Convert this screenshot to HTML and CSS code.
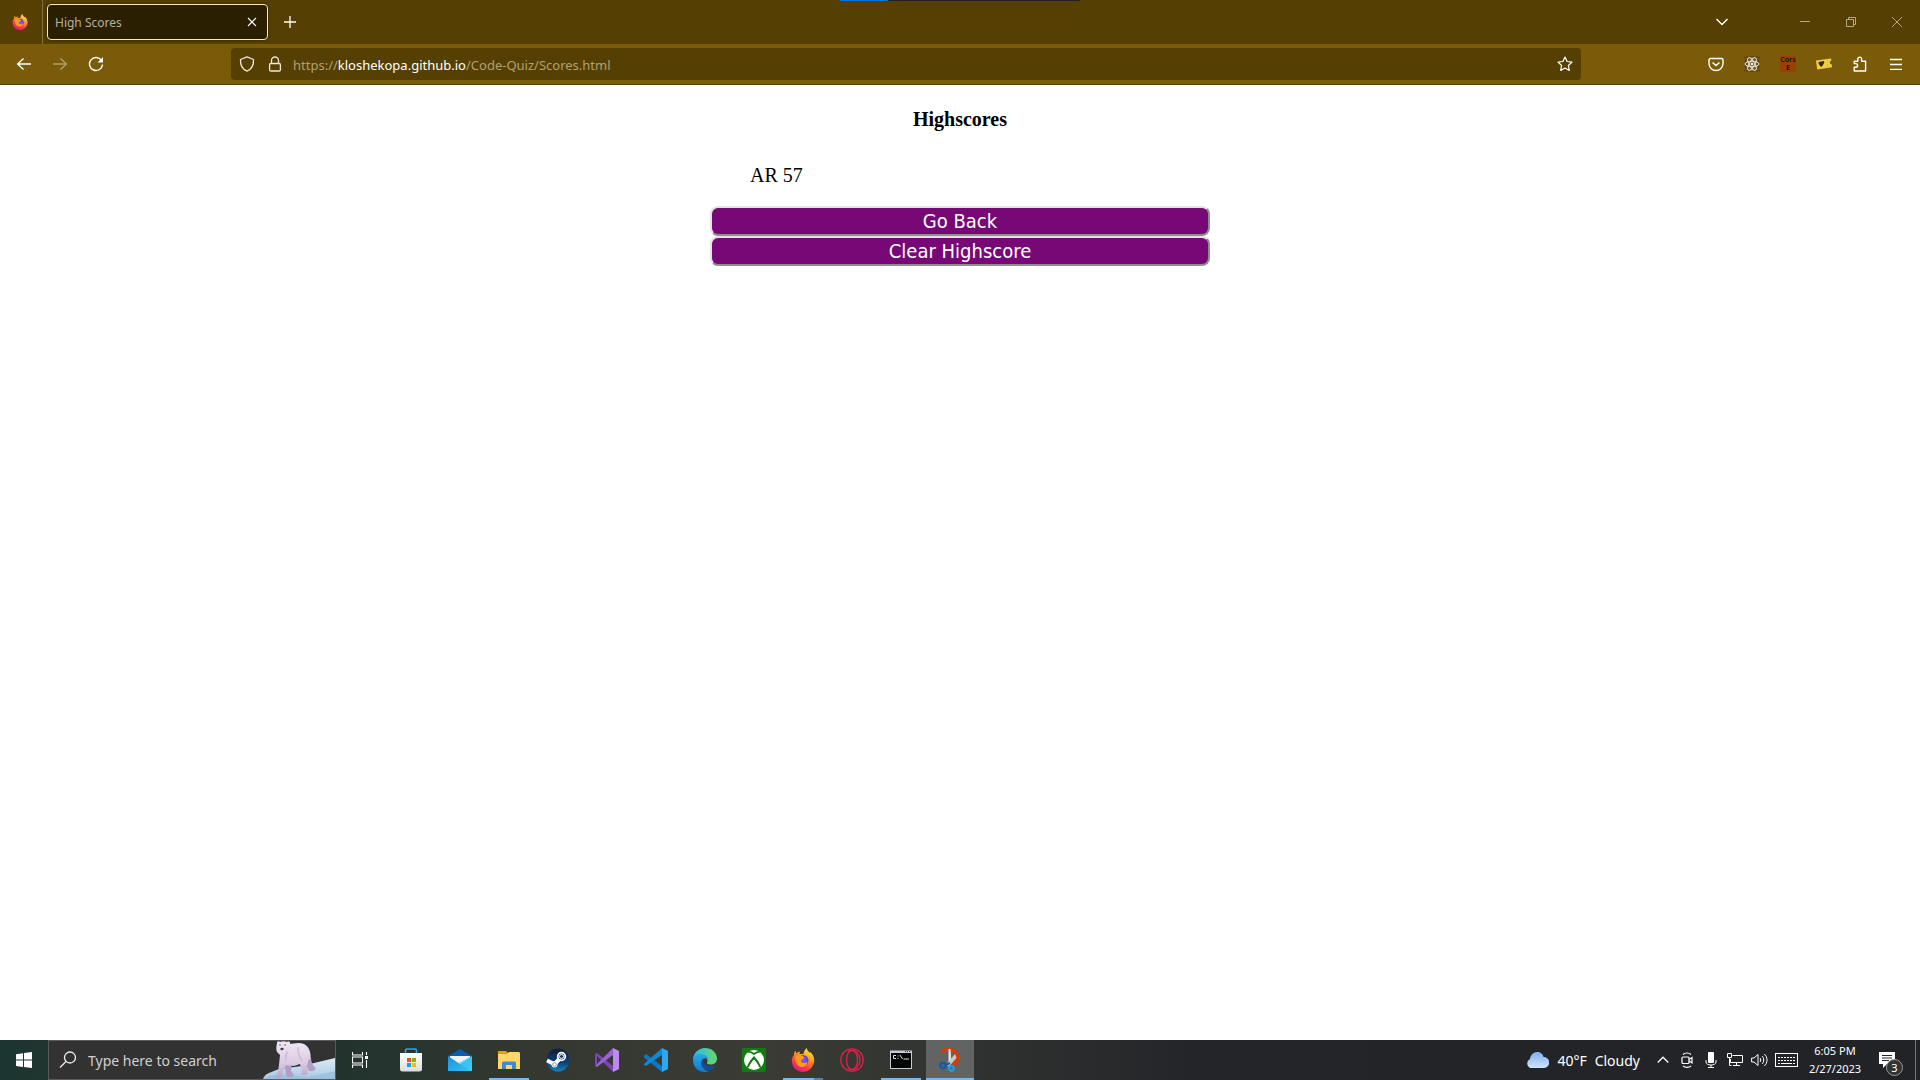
FILE: index.html
```html
<!DOCTYPE html>
<html lang="en">
<head>
<meta charset="utf-8">
<title>High Scores</title>
<link rel="stylesheet" href="styles.css">
</head>
<body>
<svg class="defs" width="0" height="0" aria-hidden="true">
  <defs>
    <linearGradient id="fxA" x1="0.8" y1="0" x2="0.3" y2="1"><stop offset="0" stop-color="#fff44f"/><stop offset=".4" stop-color="#ff980e"/><stop offset=".75" stop-color="#ff3647"/><stop offset="1" stop-color="#e31587"/></linearGradient>
    <radialGradient id="fxB"><stop offset="0" stop-color="#9059ff"/><stop offset="1" stop-color="#5b3fd0"/></radialGradient>
    <linearGradient id="store" x1="0" y1="0" x2="0" y2="1"><stop offset="0" stop-color="#fff"/><stop offset="1" stop-color="#dcdcdc"/></linearGradient>
    <linearGradient id="mail" x1="0" y1="0" x2="1" y2="1"><stop offset="0" stop-color="#1b8fe0"/><stop offset="1" stop-color="#35c7f7"/></linearGradient>
    <linearGradient id="steam" x1="0" y1="0" x2="0" y2="1"><stop offset="0" stop-color="#101c3c"/><stop offset=".6" stop-color="#0d3f74"/><stop offset="1" stop-color="#1684bd"/></linearGradient>
    <linearGradient id="edgeA" x1="0" y1="0" x2="1" y2="0"><stop offset="0" stop-color="#2bb8ee"/><stop offset="1" stop-color="#65d96b"/></linearGradient>
    <linearGradient id="edgeB" x1="0" y1="0" x2="0" y2="1"><stop offset="0" stop-color="#2aa7e6"/><stop offset="1" stop-color="#1378d0"/></linearGradient>
    <linearGradient id="cloud" x1="0" y1="0" x2="0" y2="1"><stop offset="0" stop-color="#7fb0ee"/><stop offset="1" stop-color="#cfe2fb"/></linearGradient>
    <linearGradient id="ice" x1="0" y1="0" x2="0" y2="1"><stop offset="0" stop-color="#dbeaf6"/><stop offset="1" stop-color="#a9c9e4"/></linearGradient>
    <linearGradient id="fur" x1="0" y1="0" x2="0" y2="1"><stop offset="0" stop-color="#f1e7f2"/><stop offset=".6" stop-color="#d9cbe2"/><stop offset="1" stop-color="#b7a3c9"/></linearGradient>
    <symbol id="firefox" viewBox="0 0 24 24">
      <path fill="url(#fxA)" d="M3 7c0-2 .5-3.200 1.400-4.200.2 1.200.7 2 1.400 2.400C7 4 8 3.600 9.300 3.700 8.600 4.500 8.300 5.200 8.300 6h4c.6-2.500 1.700-4.600 3.400-6 .3 1.800 1 2.800 2.300 4 .2.300.5.500.8.900.4-.2.500-.5.500-.9C22 6.500 23.500 9.500 23.200 13c-.5 6-5.200 11-11.300 11C5.500 24 .8 19 .8 12.800.8 10.600 1.500 8.800 3 7z"/>
      <circle cx="12" cy="12.500" r="5.500" fill="url(#fxB)"/>
      <path fill="#ff9a1f" d="M4.500 9c2-2 4-2.400 6.500-1.300 1 .5 1.700 1.200 2.400 1.900-.5 1.700-2.400 1.600-3.400 2.600-.5.600.1 2 1.400 2.500 2 .8 4-.2 4.800-1 .3 3-2.600 5.600-6 5.200C6 18.300 3.600 13.500 4.500 9z"/>
    </symbol>
  </defs>
</svg>

<header class="tabs">
  <span class="pinned"><svg width="16" height="16"><use href="#firefox"/></svg></span>
  <div class="tab">
    <span class="tab-title">High Scores</span>
    <button class="tab-close" aria-label="Close tab"><svg width="10" height="10" viewBox="0 0 10 10"><path d="M1 1l8 8M9 1l-8 8" stroke="#fff" stroke-width="1.100"/></svg></button>
  </div>
  <button class="tool" aria-label="New tab"><svg width="12" height="12" viewBox="0 0 12 12"><path d="M6 0v12M0 6h12" stroke="#fff" stroke-width="1.300"/></svg></button>
  <button class="tool all-tabs" aria-label="List all tabs"><svg width="14" height="8" viewBox="0 0 14 8"><path d="M1.500 1L7 6.500 12.500 1" fill="none" stroke="#fff" stroke-width="1.400"/></svg></button>
  <div class="window-buttons">
    <button aria-label="Minimize"><svg width="10" height="10" viewBox="0 0 10 10"><path d="M0 4.500h10" stroke="currentColor"/></svg></button>
    <button aria-label="Restore"><svg width="10" height="10" viewBox="0 0 10 10"><path d="M.5 2.500h7v7h-7zM2.500 2.500v-2h7v7h-2" fill="none" stroke="currentColor"/></svg></button>
    <button aria-label="Close"><svg width="10" height="10" viewBox="0 0 10 10"><path d="M0 0l10 10M10 0L0 10" stroke="currentColor"/></svg></button>
  </div>
  <span class="progress"></span>
</header>

<nav class="toolbar">
  <button class="tool" aria-label="Back"><svg width="16" height="16" viewBox="0 0 16 16"><path d="M15 8H1.500M7.500 2.500L1.700 8l5.800 5.500" fill="none" stroke="#fff" stroke-width="1.400"/></svg></button>
  <button class="tool dim" aria-label="Forward"><svg width="16" height="16" viewBox="0 0 16 16"><path d="M1 8h13.500M8.500 2.500L14.300 8l-5.800 5.500" fill="none" stroke="#fff" stroke-width="1.400"/></svg></button>
  <button class="tool" aria-label="Reload"><svg width="16" height="16" viewBox="0 0 16 16"><path d="M13.500 4.500A6.500 6.500 0 1 0 14.500 8.500" fill="none" stroke="#fff" stroke-width="1.400"/><path d="M15 1v5.500H9.500z" fill="#fff"/></svg></button>
  <div class="address">
    <svg width="16" height="16" viewBox="0 0 16 16"><path d="M8 .8l6.500 2.700C14.800 8.500 13 13 8 15.200 3 13 1.200 8.500 1.500 3.500z" fill="none" stroke="#eee7d6" stroke-width="1.300" stroke-linejoin="round"/></svg>
    <svg width="16" height="16" viewBox="0 0 16 16"><path d="M4.500 7.500V4.500a3.500 3.500 0 0 1 7 0v3" fill="none" stroke="#eee7d6" stroke-width="1.300"/><rect x="2.600" y="7.500" width="10.800" height="7.500" rx="1.200" fill="none" stroke="#eee7d6" stroke-width="1.300"/></svg>
    <span class="url">https://<b>kloshekopa.github.io</b>/Code-Quiz/Scores.html</span>
    <button class="star" aria-label="Bookmark"><svg width="16" height="16" viewBox="0 0 16 16"><path d="M8 1l2.100 4.500 4.900.6-3.600 3.400.9 4.900L8 12l-4.300 2.400.9-4.900L1 6.100l4.900-.6z" fill="none" stroke="#fff" stroke-width="1.200" stroke-linejoin="round"/></svg></button>
  </div>
  <button class="tool" aria-label="Pocket"><svg width="16" height="16" viewBox="0 0 16 16"><path d="M2.500 2.500h11a1.500 1.500 0 0 1 1.500 1.500v3.500a7 7 0 0 1-14 0V4a1.500 1.500 0 0 1 1.500-1.500z" fill="none" stroke="#fff" stroke-width="1.400"/><path d="M4.500 6.500L8 9.500l3.500-3" fill="none" stroke="#fff" stroke-width="1.600"/></svg></button>
  <button class="tool" aria-label="React tools"><svg width="16" height="16" viewBox="0 0 16 16"><rect width="16" height="16" fill="#665014"/><g fill="none" stroke="#eee8dc" stroke-width="1"><ellipse cx="8" cy="8" rx="7" ry="2.700"/><ellipse cx="8" cy="8" rx="7" ry="2.700" transform="rotate(60 8 8)"/><ellipse cx="8" cy="8" rx="7" ry="2.700" transform="rotate(120 8 8)"/></g><circle cx="8" cy="8" r="1.300" fill="#fff"/></svg></button>
  <button class="tool" aria-label="Cors"><span class="cors">Cors<br>E</span></button>
  <button class="tool" aria-label="Tickets"><svg width="16" height="16" viewBox="0 0 16 16"><path d="M0 4.500L15 2.500l.3 2.300a1.500 1.500 0 0 0 .4 3.500l.3 3L1.200 13.500z" fill="#f2cf3e"/><path d="M2.500 6l5.500-.9.300 1.600-2.300 3.800-1.200.2-2-2.700z" fill="#2f2a12"/><path d="M11.500 4v8" stroke="#d2ad28" stroke-dasharray="1 1"/></svg></button>
  <button class="tool" aria-label="Extensions"><svg width="16" height="16" viewBox="0 0 16 16"><path d="M2.200 15V11.200h1.600a1.800 1.800 0 0 0 0-3.600H2.200V5.200h3.600V3a1.900 1.900 0 0 1 3.800 0v2.200h4V15z" fill="none" stroke="#fff" stroke-width="1.400" stroke-linejoin="round"/></svg></button>
  <button class="tool" aria-label="Menu"><svg width="12" height="12" viewBox="0 0 12 12"><path d="M0 1.500h12M0 6.500h12M0 11.300h12" stroke="#fff" stroke-width="1.300"/></svg></button>
</nav>

<main class="page">
  <h1>Highscores</h1>
  <ul class="scores"><li>AR 57</li></ul>
  <button class="action">Go Back</button>
  <button class="action">Clear Highscore</button>
</main>

<footer class="taskbar">
  <button class="start" aria-label="Start"><svg width="16" height="16" viewBox="0 0 16 16"><path d="M0 2.200L7 1.200v6.400H0zM8 1l8-1v7.600H8zM0 8.500h7v6.400l-7-1zM8 8.500h8V16l-8-1z" fill="#fff"/></svg></button>
  <div class="search">
    <svg width="18" height="18" viewBox="0 0 18 18"><circle cx="11" cy="6.500" r="5.500" fill="none" stroke="#eee" stroke-width="1.300"/><path d="M7 10.500L1 16.500" stroke="#eee" stroke-width="1.300"/></svg>
    <input type="text" placeholder="Type here to search" aria-label="Search">
    <svg class="bear" width="72" height="38" viewBox="0 0 72 38">
      <path d="M0 38c1-3 3-5 6-6l10-4 23-3 12-3 21-5v21z" fill="url(#ice)"/>
      <path d="M1 38c8-5 15-6 24-4l20 2 27-6v8z" fill="#8fbadd" opacity=".6"/>
      <path d="M35 15l13 1c0 4 1 6 2 8l3 4-3 2h-4l-3-6-5-1zM21 20l8 2-1 8 3 4-2 2h-5l-1-3z" fill="#b39fc6"/>
      <path d="M14 2c0-2 2-2 3-1 2-1 5-1 7 0 2-1 4 0 3 2 2 0 5-1 9-1 6 0 10 4 11 9 1 4 1 7-2 9l-1 6 1 6-2 2h-5l1-4-2-7-6 2-8-1-3 7-1 5-2 1h-5l1-3 2-3 1-7 1-10-2-2c-2-2-2-5-1-10z" fill="url(#fur)"/>
      <path d="M35 6c-1 5 1 9 4 14M25 10c-2 3-3 6-2 10" fill="none" stroke="#bda9cb" stroke-width="1.500" opacity=".6"/>
      <ellipse cx="19" cy="8" rx="1.700" ry="1.200" fill="#433850"/><circle cx="17" cy="4" r=".7" fill="#433850"/><circle cx="22" cy="4" r=".7" fill="#433850"/>
    </svg>
  </div>
  <div class="apps">
    <button class="task-view" aria-label="Task view"><svg width="16" height="16" viewBox="0 0 16 16"><path d="M.5 0v3h10V0M.5 16v-3h10v3M.5 5h10v6H.5zM14.500 0v3M14.500 8v8" fill="none" stroke="#fff" stroke-width="1.100"/><rect x="13" y="4" width="3" height="3" fill="#fff"/></svg></button>
    <button aria-label="Store"><svg width="24" height="24" viewBox="0 0 24 24"><path d="M6.500 6V2.500A1.500 1.500 0 0 1 8 1h8a1.500 1.500 0 0 1 1.500 1.500V6" fill="none" stroke="#26a9df" stroke-width="1.600"/><path d="M1 5h22v16a2.500 2.500 0 0 1-2.500 2.500h-17A2.500 2.500 0 0 1 1 21z" fill="url(#store)"/><path fill="#f25022" d="M8 10h4v4H8z"/><path fill="#7fba00" d="M13 10h4v4h-4z"/><path fill="#00a4ef" d="M8 15h4v4H8z"/><path fill="#ffb900" d="M13 15h4v4h-4z"/></svg></button>
    <button aria-label="Mail"><svg width="24" height="24" viewBox="0 0 24 24"><path d="M0 8L12 1l12 7v3H0z" fill="#0e5cae"/><path d="M2 8h20v8H2z" fill="#f3f3f3"/><path d="M0 8l12 8 12-8v15H0z" fill="url(#mail)"/><path d="M24 8v15L10 15z" fill="#3fd0fb" opacity=".6"/></svg></button>
    <button class="open" aria-label="File Explorer"><svg width="24" height="24" viewBox="0 0 24 24"><path d="M1 3h8l2 2h12v4H1z" fill="#e0a014"/><path d="M1 6h9l2-2h10l1 1v16H1z" fill="#ffd766"/><path d="M5 21v-6a1.500 1.500 0 0 1 1.500-1.500h11A1.500 1.500 0 0 1 19 15v6h-4v-4H9v4z" fill="#3a8dd4"/></svg></button>
    <button aria-label="Steam"><svg width="24" height="24" viewBox="0 0 24 24"><circle cx="12" cy="12" r="11.500" fill="url(#steam)"/><path d="M1 12.500l7.500 3.500 5-5" stroke="#fff" stroke-width="4" fill="none"/><circle cx="8.500" cy="16.500" r="3" fill="#fff"/><circle cx="8.500" cy="16.500" r="1.800" fill="none" stroke="#5b7391" stroke-width=".7"/><circle cx="15.500" cy="8.500" r="3.800" fill="#17345f" stroke="#fff" stroke-width="1.800"/><circle cx="15.500" cy="8.500" r="2" fill="none" stroke="#fff"/></svg></button>
    <button aria-label="Visual Studio"><svg width="24" height="24" viewBox="0 0 24 24"><path d="M0 6l2-1 16 13v6L2 8v8l-2 2z" fill="#7b45b4"/><path d="M0 18l2-2L18 0v7L2 19z" fill="#9b60d6"/><path d="M18 0l6 3v18l-6 3z" fill="#bd8bf0"/></svg></button>
    <button aria-label="Visual Studio Code"><svg width="24" height="24" viewBox="0 0 24 24"><path d="M0 8l2-2 16 12v6L0 9.500z" fill="#0a78c2"/><path d="M0 16L18 0v7L2 18l-2-1z" fill="#1288d5"/><path d="M18 0l6 3v18l-6 3z" fill="#2ba8f2"/></svg></button>
    <button aria-label="Edge"><svg width="24" height="24" viewBox="0 0 24 24"><path d="M0 12A12 12 0 0 1 12 0c7 0 12 5 12 10.500 0 4-3 6-6.500 6-2.500 0-4-1-3.500-2 1.500-2 0-6-4-6.500C5 7.500 1 10 0 13z" fill="url(#edgeA)"/><path d="M0 12c1-5 5-7 9-6 4 .7 6 3 6 5-3-2-6.500 0-6.500 4 0 5 4.500 8.500 8 8-2 .7-4 1-5 1C5 24 0 18.500 0 12z" fill="url(#edgeB)"/><path d="M10 10.500c-4 5 0 12 7 12 2.500-1 4.500-3 6-5.500-3 2-7 2-9.500.5S10 13 10 10.500z" fill="#104f9e"/></svg></button>
    <button aria-label="Xbox"><svg width="24" height="24" viewBox="0 0 24 24"><rect width="24" height="24" rx="2" fill="#107c10"/><circle cx="12" cy="12" r="10" fill="#fff"/><path d="M6 4c2-.5 4 .5 6 2 2-1.500 4-2.500 6-2" fill="none" stroke="#107c10" stroke-width="1.600"/><path d="M4.500 20C6 15 9 11 12 8c3 3 6 7 7.500 12L17 19c-1-3-3-5.500-5-7.500C10 13.500 8 16 7 19z" fill="#107c10"/></svg></button>
    <button class="open stacked" aria-label="Firefox"><svg width="24" height="24"><use href="#firefox"/></svg></button>
    <button aria-label="Opera"><svg width="24" height="24" viewBox="0 0 24 24"><g fill="none" stroke="#dd1f4b" stroke-width="1.300"><circle cx="12" cy="12" r="11.200"/><ellipse cx="12" cy="12" rx="5.500" ry="9.500"/><path d="M8 3.500c3-2 7-1.500 9 1 4 4.500 4 10.500 0 15-2 2.500-6 3-9 1"/></g></svg></button>
    <button class="open" aria-label="Command Prompt"><svg width="24" height="24" viewBox="0 0 24 24"><path d="M1 2.500h22v18.500H1z" fill="#c5cad6"/><path d="M2 5h20v15H2z" fill="#050505"/><path d="M16 3.500h1M18 3.500h1M20 3.500h1" stroke="#345"/><path d="M7 7.500H4.500v3H7M9 7.500v1M9 10v1M11 7l2.500 4M14.500 11H20" fill="none" stroke="#ddd" stroke-width="1"/></svg></button>
    <button class="current" aria-label="Snipping Tool"><svg width="24" height="24" viewBox="0 0 24 24"><path d="M4 5c1-3 4-4 8-3.500 5 .5 7.500 4.500 7.500 8.500 0 3-2 6-5 7" fill="none" stroke="#d83b01" stroke-width="3.500"/><path d="M10.500 1h2l1 14-3 1z" fill="#e4e4e4"/><path d="M17 6l1.500 4-8 9-2-3z" fill="#c9c9c9"/><circle cx="5" cy="17.500" r="2.700" fill="none" stroke="#0f5cad" stroke-width="2.200"/><path d="M8 17l4-2" stroke="#0f5cad" stroke-width="2"/><circle cx="13.500" cy="20.500" r="2.300" fill="none" stroke="#1e9be2" stroke-width="2.200"/></svg></button>
  </div>
  <div class="tray">
    <button class="weather"><svg width="24" height="16" viewBox="0 0 24 16"><path d="M5 16a5 5 0 0 1 0-9C5.500 3 8.500 0 12 0c3.500 0 6 2 6.500 5A5.500 5.500 0 0 1 19 16z" fill="url(#cloud)"/></svg><span>40°F</span><span>Cloudy</span></button>
    <button class="icon" aria-label="Show hidden icons"><svg width="12" height="8" viewBox="0 0 12 8"><path d="M.7 6.500L6 1.200l5.300 5.300" fill="none" stroke="#fff" stroke-width="1.300"/></svg></button>
    <button class="icon" aria-label="Meet Now"><svg width="12" height="16" viewBox="0 0 12 16"><g fill="none" stroke="#fff" stroke-width="1.200"><rect x="1" y="5" width="7" height="6.500" rx="1"/><path d="M8 7.500l3-2v5.500l-3-2M2 2.500c2-2 6-2 8 0M2 13.800c2 2 6 2 8 0"/></g></svg></button>
    <button class="icon" aria-label="Microphone"><svg width="12" height="16" viewBox="0 0 12 16"><rect x="3" y="0" width="6" height="11" rx="1" fill="#fff"/><path d="M1 8v2c0 4 10 4 10 0V8M6 13v2.500M3 15.500h6" fill="none" stroke="#fff"/></svg></button>
    <button class="icon" aria-label="Network"><svg width="16" height="16" viewBox="0 0 16 16"><path d="M5.500 3.500h10v7h-12V7M9.500 10.500v3M6 13.500h7M.5 1.500h4v4h-4zM2.500 5.500v8h2" fill="none" stroke="#fff"/></svg></button>
    <button class="icon" aria-label="Volume"><svg width="17" height="14" viewBox="0 0 17 14"><path d="M.6 5v4H3l4 3.500v-11L3 5zM9 5c1 1 1 3 0 4M11 3c2.300 2 2.300 6 0 8M13.300 1c3.600 3 3.600 9 0 12" fill="none" stroke="#fff"/></svg></button>
    <button class="keyboard" aria-label="Touch keyboard"><svg width="23" height="14" viewBox="0 0 23 14"><rect x=".5" y=".5" width="22" height="13" fill="none" stroke="#fff"/><path d="M3 4.500h17M3 7.500h17" stroke="#fff" stroke-dasharray="2 1"/><path d="M6 10.500h11M3 10.500h2M18 10.500h2" stroke="#fff"/></svg></button>
    <button class="clock">6:05 PM<br>2/27/2023</button>
    <button class="notify" aria-label="Notifications"><svg width="16" height="16" viewBox="0 0 16 16"><path d="M0 0h16v12H8l-4 4v-4H0z" fill="#fff"/><path d="M3 3.500h10M3 6h10M3 8.500h7" stroke="#222"/></svg><span class="badge">3</span></button>
    <span class="desktop-edge"></span>
  </div>
</footer>
</body>
</html>
```

FILE: styles.css
```css
* { box-sizing: border-box; }

body {
  margin: 0;
  min-height: 100vh;
  display: flex;
  flex-direction: column;
  background: #fff;
  font-family: "Noto Sans", sans-serif;
}

button {
  display: flex;
  align-items: center;
  justify-content: center;
  padding: 0;
  border: 0;
  background: none;
  color: #fff;
  font: inherit;
}

svg { display: block; flex: none; }
.defs { position: absolute; }

/* Tab strip */
.tabs {
  position: relative;
  display: flex;
  height: 44px;
  background: #553f02;
}
.pinned {
  display: flex;
  align-items: center;
  width: 43px;
  padding-left: 12px;
  border-right: 1px solid #806e3f;
}
.tab {
  display: flex;
  align-items: center;
  justify-content: space-between;
  width: 221px;
  height: 36px;
  margin: 4px 4px 0;
  padding: 0 10px 0 7px;
  border: 1px solid #ffe9a6;
  border-radius: 4px;
  background: #2a1f01;
  box-shadow: 0 0 3px #2a1f01;
}
.tab-title { padding-top: 1px; color: #b5b09c; font-size: 12px; }
.tool { width: 36px; }
.dim { opacity: 0.4; }
.all-tabs { margin: 0 42px 0 auto; }
.window-buttons { display: flex; }
.window-buttons button { width: 46px; color: #b5a987; }
.progress {
  position: absolute;
  top: 0;
  left: 50%;
  width: 240px;
  height: 1px;
  margin-left: -120px;
  background: linear-gradient(90deg, #0078d7 48px, #222 48px);
}

/* Navigation toolbar */
.toolbar {
  display: flex;
  height: 41px;
  padding: 0 6px;
  border-bottom: 1px solid #553f02;
  background: #795b09;
}
.address {
  display: flex;
  flex: 1;
  align-items: center;
  gap: 12px;
  height: 32px;
  margin: 4px 117px;
  padding: 0 8px;
  border-radius: 4px;
  background: #553f02;
}
.url { flex: 1; margin-left: -2px; padding-top: 2px; color: #b3a06c; font-size: 13px; }
.url b { color: #fff; font-weight: 400; }
.cors {
  width: 16px;
  height: 16px;
  background: #9a4206;
  color: #2a1204;
  font-size: 7px;
  font-weight: 700;
  line-height: 8px;
}

/* Score page */
.page {
  flex: 1;
  width: 500px;
  margin: 0 auto;
  font-family: "Liberation Serif", serif;
  font-size: 20px;
  line-height: 24px;
}
.page h1 { margin: 22px 0 32px; font-size: 20px; text-align: center; }
.scores { margin: 0 0 19px; padding-left: 40px; list-style: none; }
.action {
  width: 100%;
  height: 30px;
  border: 2px outset #e3e3e3;
  border-radius: 8px;
  background: #780876;
  font-family: "DejaVu Sans Condensed", "DejaVu Sans", sans-serif;
  font-size: 20px;
}

/* Taskbar */
.taskbar {
  display: flex;
  height: 40px;
  background: linear-gradient(90deg, #1d3530 0, #22332e 18%, #343830 28%, #3a3b34 40%, #303331 50%, #242529 62%, #222326 100%);
}
.start { width: 48px; }
.search {
  position: relative;
  display: flex;
  align-items: center;
  gap: 11px;
  width: 288px;
  padding-left: 10px;
  border: 1px solid #5b5b5b;
  background: #323232;
}
.search input {
  width: 160px;
  padding: 0;
  border: 0;
  background: none;
  color: #fff;
  font: 14px "Noto Sans", sans-serif;
}
.search input::placeholder { color: #d0d0d0; }
.bear { position: absolute; right: 0; bottom: 0; }
.apps { display: flex; gap: 1px; }
.apps button { width: 48px; }
.apps .task-view { margin-right: 2px; }
.apps .open {
  background: linear-gradient(#76b9ed, #76b9ed) center bottom / 40px 2px no-repeat;
}
.apps .stacked {
  background-image: linear-gradient(90deg, #76b9ed 31px, #55809f 31px);
}
.apps .current { background: #626363; border-bottom: 2px solid #76b9ed; padding-top: 2px; }
.tray { display: flex; margin-left: auto; color: #fff; }
.weather { gap: 8px; margin-right: 11px; font-size: 14px; }
.icon { width: 24px; }
.keyboard { width: 31px; }
.clock { width: 66px; font-size: 11px; line-height: 18px; }
.notify { position: relative; width: 47px; padding-right: 9px; }
.badge {
  position: absolute;
  left: 18px;
  top: 19px;
  width: 17px;
  height: 17px;
  border: 1px solid #999;
  border-radius: 50%;
  background: #333;
  font-size: 11px;
  line-height: 15px;
}
.desktop-edge { width: 5px; border-left: 1px solid #77787a; }
```
